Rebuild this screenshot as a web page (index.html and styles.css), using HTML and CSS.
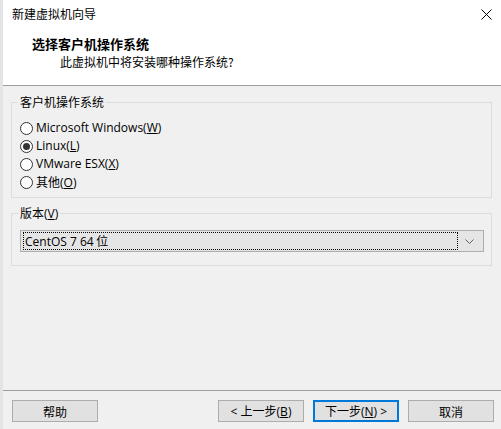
FILE: index.html
```html
<!DOCTYPE html>
<html lang="zh-CN">

<head>
    <meta charset="UTF-8" />
    <meta name="viewport" content="width=device-width, initial-scale=1.0" />
    <title>新建虚拟机向导</title>
    <link rel="stylesheet" href="styles.css">
</head>

<body>
    <div class="window">
        <div class="titlebar">
            <span class="title">新建虚拟机向导</span>
            <svg class="close" width="11" height="11" viewBox="0 0 11 11">
                <path d="M0.5 0.5 L10.5 10.5 M10.5 0.5 L0.5 10.5" stroke="#000" stroke-width="1" fill="none" />
            </svg>
        </div>
        <div class="header">
            <h1>选择客户机操作系统</h1>
            <p>此虚拟机中将安装哪种操作系统?</p>
        </div>
        <div class="content">
            <div class="group">
                <span class="group-title">客户机操作系统</span>
                <div class="radios">
                    <label class="radio"><span class="dot"></span><span class="latin">Microsoft Windows(<u>W</u>)</span></label>
                    <label class="radio checked"><span class="dot"></span><span class="latin">Linux(<u>L</u>)</span></label>
                    <label class="radio"><span class="dot"></span><span class="latin">VMware ESX(<u>X</u>)</span></label>
                    <label class="radio"><span class="dot"></span><span>其他<span class="latin">(<u>O</u>)</span></span></label>
                </div>
            </div>
            <div class="group version">
                <span class="group-title">版本<span class="latin">(<u>V</u>)</span></span>
                <div class="select">
                    <span class="select-value"><span class="latin">CentOS 7 64</span> 位</span>
                    <svg class="chevron" width="9" height="5" viewBox="0 0 9 5">
                        <path d="M0.5 0.5 L4.5 4.5 L8.5 0.5" stroke="#606060" stroke-width="1" fill="none" />
                    </svg>
                </div>
            </div>
        </div>
        <div class="footer">
            <button>帮助</button>
            <div class="nav">
                <button><span class="latin">&lt; </span>上一步<span class="latin">(<u>B</u>)</span></button>
                <button class="primary">下一步<span class="latin">(<u>N</u>) &gt;</span></button>
                <button>取消</button>
            </div>
        </div>
    </div>
</body>

</html>
```

FILE: styles.css
```css
* {
    margin: 0;
    padding: 0;
    box-sizing: border-box;
}

body {
    font-family: "Noto Sans CJK SC", sans-serif;
    font-size: 12px;
    line-height: 16px;
    color: #000;
    background-color: #f0f0f0;
}

.latin {
    font-family: "Open Sans", "Noto Sans CJK SC", sans-serif;
}

.window {
    width: 501px;
    height: 429px;
    display: flex;
    flex-direction: column;
    border-left: 3px solid #e4e4e4;
}

.titlebar {
    height: 28px;
    background-color: #fff;
    display: flex;
    align-items: center;
    justify-content: space-between;
    padding: 0 9px 0 9px;
}

.header {
    height: 58px;
    background-color: #fff;
    border-bottom: 1px solid #a0a0a0;
    padding: 7px 0 0 29px;
}

.header h1 {
    font-size: 13px;
    font-weight: bold;
    line-height: 18px;
}

.header p {
    line-height: 18px;
    padding-left: 28px;
}

.content {
    flex: 1;
    padding: 16px 9px 0 8px;
}

.group {
    border: 1px solid #dcdcdc;
    padding: 0 7px 6px 8px;
}

.group-title {
    display: block;
    width: max-content;
    height: 16px;
    margin: -9px 0 0 -2px;
    padding: 0 2px;
    background-color: #f0f0f0;
}

.radios {
    margin-top: 9px;
}

.radio {
    display: flex;
    align-items: center;
    height: 18px;
    gap: 3px;
}

.dot {
    width: 13px;
    height: 13px;
    border: 1px solid #333;
    border-radius: 50%;
    background-color: #fff;
    display: flex;
    align-items: center;
    justify-content: center;
}

.radio.checked .dot::after {
    content: "";
    width: 7px;
    height: 7px;
    border-radius: 50%;
    background-color: #333;
}

.version {
    margin-top: 15px;
    padding-bottom: 13px;
}

.select {
    margin-top: 9px;
    height: 22px;
    border: 1px solid #adadad;
    background-color: #e5e5e5;
    display: flex;
    align-items: center;
    padding: 0 9px 0 2px;
}

.select-value {
    flex: 1;
    height: 18px;
    border: 1px dotted #000;
    padding-left: 1px;
    margin-right: 7px;
}

.chevron {
    margin-top: 1px;
}

.footer {
    height: 39px;
    border-top: 1px solid #a0a0a0;
    padding: 9px 7px 0 9px;
    display: flex;
    justify-content: space-between;
    align-items: flex-start;
}

.nav {
    display: flex;
    gap: 9px;
}

button {
    font-family: inherit;
    font-size: 12px;
    width: 86px;
    height: 22px;
    background-color: #e1e1e1;
    border: 1px solid #adadad;
    color: #000;
}

button.primary {
    border: 2px solid #0078d7;
}
```
